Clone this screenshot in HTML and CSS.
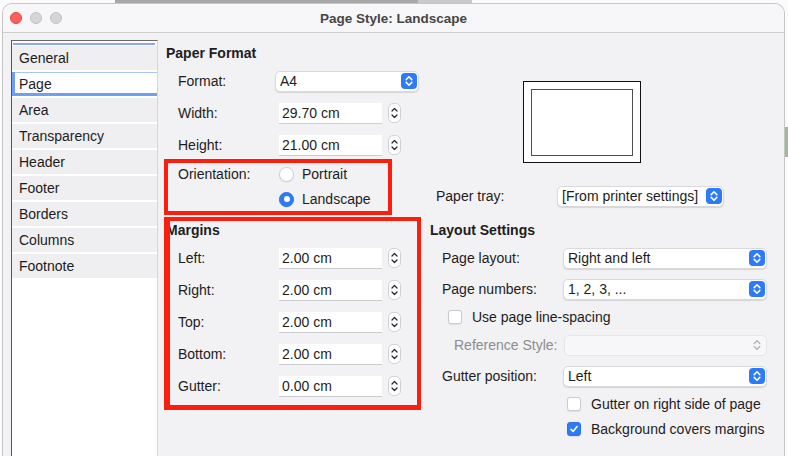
FILE: index.html
```html
<!DOCTYPE html>
<html>
<head>
<meta charset="utf-8">
<title>Page Style: Landscape</title>
<link rel="stylesheet" href="styles.css">
</head>
<body>
<div class="window">
  <div class="titlebar">
    <div class="lights"><span class="light red"></span><span class="light"></span><span class="light"></span></div>
    <div class="title">Page Style: Landscape</div>
    <div></div>
  </div>
  <div class="content">
    <div class="sidebar">
      <div class="focusline"></div>
      <div class="tab">General</div>
      <div class="tab selected">Page</div>
      <div class="tab">Area</div>
      <div class="tab">Transparency</div>
      <div class="tab">Header</div>
      <div class="tab">Footer</div>
      <div class="tab">Borders</div>
      <div class="tab">Columns</div>
      <div class="tab">Footnote</div>
    </div>
    <div class="main">
      <div class="col-left">
        <div class="heading h-paper">Paper Format</div>
        <div class="row">
          <span class="label">Format:</span>
          <div class="select s-format"><span>A4</span>
            <svg class="stepper" viewBox="0 0 16 16"><rect x="0" y="0" width="16" height="16" rx="4" fill="#2d7bf6"/><path d="M5.2 6.6 L8 3.8 L10.8 6.6 M5.2 9.4 L8 12.2 L10.8 9.4" fill="none" stroke="#fff" stroke-width="1.6" stroke-linecap="round" stroke-linejoin="round"/></svg>
          </div>
        </div>
        <div class="row">
          <span class="label">Width:</span>
          <div class="spin"><div class="field">29.70 cm</div>
            <svg class="spinbtn" viewBox="0 0 13 20"><rect x="0.5" y="0.5" width="12" height="19" rx="5" fill="#fff" stroke="#cfcfcf"/><path d="M4 8 L6.5 5.5 L9 8 M4 12 L6.5 14.5 L9 12" fill="none" stroke="#2a2a2a" stroke-width="1.3" stroke-linecap="round" stroke-linejoin="round"/></svg>
          </div>
        </div>
        <div class="row">
          <span class="label">Height:</span>
          <div class="spin"><div class="field">21.00 cm</div>
            <svg class="spinbtn" viewBox="0 0 13 20"><rect x="0.5" y="0.5" width="12" height="19" rx="5" fill="#fff" stroke="#cfcfcf"/><path d="M4 8 L6.5 5.5 L9 8 M4 12 L6.5 14.5 L9 12" fill="none" stroke="#2a2a2a" stroke-width="1.3" stroke-linecap="round" stroke-linejoin="round"/></svg>
          </div>
        </div>
        <div class="orow r1"><span class="label">Orientation:</span><span class="radio"></span><span>Portrait</span></div>
        <div class="orow r2"><span class="label"></span><span class="radio on"></span><span>Landscape</span></div>

        <div class="heading h-margins">Margins</div>
        <div class="row">
          <span class="label">Left:</span>
          <div class="spin"><div class="field">2.00 cm</div>
            <svg class="spinbtn" viewBox="0 0 13 20"><rect x="0.5" y="0.5" width="12" height="19" rx="5" fill="#fff" stroke="#cfcfcf"/><path d="M4 8 L6.5 5.5 L9 8 M4 12 L6.5 14.5 L9 12" fill="none" stroke="#2a2a2a" stroke-width="1.3" stroke-linecap="round" stroke-linejoin="round"/></svg>
          </div>
        </div>
        <div class="row">
          <span class="label">Right:</span>
          <div class="spin"><div class="field">2.00 cm</div>
            <svg class="spinbtn" viewBox="0 0 13 20"><rect x="0.5" y="0.5" width="12" height="19" rx="5" fill="#fff" stroke="#cfcfcf"/><path d="M4 8 L6.5 5.5 L9 8 M4 12 L6.5 14.5 L9 12" fill="none" stroke="#2a2a2a" stroke-width="1.3" stroke-linecap="round" stroke-linejoin="round"/></svg>
          </div>
        </div>
        <div class="row">
          <span class="label">Top:</span>
          <div class="spin"><div class="field">2.00 cm</div>
            <svg class="spinbtn" viewBox="0 0 13 20"><rect x="0.5" y="0.5" width="12" height="19" rx="5" fill="#fff" stroke="#cfcfcf"/><path d="M4 8 L6.5 5.5 L9 8 M4 12 L6.5 14.5 L9 12" fill="none" stroke="#2a2a2a" stroke-width="1.3" stroke-linecap="round" stroke-linejoin="round"/></svg>
          </div>
        </div>
        <div class="row">
          <span class="label">Bottom:</span>
          <div class="spin"><div class="field">2.00 cm</div>
            <svg class="spinbtn" viewBox="0 0 13 20"><rect x="0.5" y="0.5" width="12" height="19" rx="5" fill="#fff" stroke="#cfcfcf"/><path d="M4 8 L6.5 5.5 L9 8 M4 12 L6.5 14.5 L9 12" fill="none" stroke="#2a2a2a" stroke-width="1.3" stroke-linecap="round" stroke-linejoin="round"/></svg>
          </div>
        </div>
        <div class="row">
          <span class="label">Gutter:</span>
          <div class="spin"><div class="field">0.00 cm</div>
            <svg class="spinbtn" viewBox="0 0 13 20"><rect x="0.5" y="0.5" width="12" height="19" rx="5" fill="#fff" stroke="#cfcfcf"/><path d="M4 8 L6.5 5.5 L9 8 M4 12 L6.5 14.5 L9 12" fill="none" stroke="#2a2a2a" stroke-width="1.3" stroke-linecap="round" stroke-linejoin="round"/></svg>
          </div>
        </div>
      </div>

      <div class="col-right">
        <div class="preview"><div class="page"></div></div>
        <div class="rrow tray">
          <span class="rlabel">Paper tray:</span>
          <div class="select s-tray"><span>[From printer settings]</span>
            <svg class="stepper" viewBox="0 0 16 16"><rect x="0" y="0" width="16" height="16" rx="4" fill="#2d7bf6"/><path d="M5.2 6.6 L8 3.8 L10.8 6.6 M5.2 9.4 L8 12.2 L10.8 9.4" fill="none" stroke="#fff" stroke-width="1.6" stroke-linecap="round" stroke-linejoin="round"/></svg>
          </div>
        </div>
        <div class="heading h-layout">Layout Settings</div>
        <div class="rrow h32 ind">
          <span class="rlabel">Page layout:</span>
          <div class="select s-wide"><span>Right and left</span>
            <svg class="stepper" viewBox="0 0 16 16"><rect x="0" y="0" width="16" height="16" rx="4" fill="#2d7bf6"/><path d="M5.2 6.6 L8 3.8 L10.8 6.6 M5.2 9.4 L8 12.2 L10.8 9.4" fill="none" stroke="#fff" stroke-width="1.6" stroke-linecap="round" stroke-linejoin="round"/></svg>
          </div>
        </div>
        <div class="rrow h30 ind">
          <span class="rlabel">Page numbers:</span>
          <div class="select s-wide"><span>1, 2, 3, ...</span>
            <svg class="stepper" viewBox="0 0 16 16"><rect x="0" y="0" width="16" height="16" rx="4" fill="#2d7bf6"/><path d="M5.2 6.6 L8 3.8 L10.8 6.6 M5.2 9.4 L8 12.2 L10.8 9.4" fill="none" stroke="#fff" stroke-width="1.6" stroke-linecap="round" stroke-linejoin="round"/></svg>
          </div>
        </div>
        <div class="rrow h26 chk-line">
          <span class="checkbox"></span><span>Use page line-spacing</span>
        </div>
        <div class="rrow h30 ref">
          <span class="rlabel disabled">Reference Style:</span>
          <div class="select s-ref disabled-select"><span></span>
            <svg class="stepper" viewBox="0 0 16 16"><path d="M5.2 6.6 L8 3.8 L10.8 6.6 M5.2 9.4 L8 12.2 L10.8 9.4" fill="none" stroke="#b4b4b4" stroke-width="1.4" stroke-linecap="round" stroke-linejoin="round"/></svg>
          </div>
        </div>
        <div class="rrow h32 ind">
          <span class="rlabel">Gutter position:</span>
          <div class="select s-wide"><span>Left</span>
            <svg class="stepper" viewBox="0 0 16 16"><rect x="0" y="0" width="16" height="16" rx="4" fill="#2d7bf6"/><path d="M5.2 6.6 L8 3.8 L10.8 6.6 M5.2 9.4 L8 12.2 L10.8 9.4" fill="none" stroke="#fff" stroke-width="1.6" stroke-linecap="round" stroke-linejoin="round"/></svg>
          </div>
        </div>
        <div class="rrow h24 chk-sub">
          <span class="checkbox"></span><span>Gutter on right side of page</span>
        </div>
        <div class="rrow h26 chk-sub">
          <span class="checkbox checked"><svg viewBox="0 0 14 14"><path d="M3.4 7.3 L5.9 9.8 L10.6 4.2" fill="none" stroke="#fff" stroke-width="1.9" stroke-linecap="round" stroke-linejoin="round"/></svg></span><span>Background covers margins</span>
        </div>
      </div>
    </div>
  </div>
  <div class="annot a-orient"></div>
  <div class="annot a-margins"></div>
</div>
</body>
</html>
```
FILE: styles.css
```css
html, body {
  margin: 0;
  padding: 0;
}
body {
  width: 788px;
  height: 456px;
  overflow: hidden;
  font-family: "Liberation Sans", Arial, Helvetica, sans-serif;
  font-size: 14px;
  color: #1d1d1d;
  background:
    linear-gradient(#a8a8a8, #a8a8a8) 115px 0 / 303px 4px no-repeat,
    linear-gradient(#c9c9c9, #c9c9c9) 418px 0 / 54px 4px no-repeat,
    linear-gradient(#a5b997, #a5b997) 784px 127px / 4px 30px no-repeat,
    #fbfbfb;
}
.window {
  position: relative;
  margin: 3px 0 0 2px;
  width: 783px;
  height: 470px;
  box-sizing: border-box;
  border: 1px solid #c6c6c6;
  border-bottom: none;
  border-radius: 10px 10px 0 0;
  background: #f2f1f4;
  overflow: hidden;
}
.titlebar {
  height: 28px;
  border-bottom: 1px solid #cdcdcd;
  background: #f7f6f8;
  display: grid;
  grid-template-columns: 1fr auto 1fr;
  align-items: center;
}
.lights {
  display: flex;
  gap: 8px;
  padding-left: 7px;
}
.light {
  width: 12px;
  height: 12px;
  box-sizing: border-box;
  border-radius: 50%;
  background: #d5d4d6;
  border: 1px solid #c3c2c4;
}
.light.red {
  background: #fe5f57;
  border-color: #e2463f;
}
.title {
  font-weight: bold;
  font-size: 13.5px;
  color: #464646;
}
.content {
  display: flex;
  height: 440px;
}
.sidebar {
  margin: 7px 0 0 8px;
  width: 147px;
  flex: none;
  box-sizing: border-box;
  border-top: 1px solid #6a6a6a;
  border-left: 1px solid #555;
  border-right: 1px solid #d6d6d6;
  background: #fff;
  padding-top: 2px;
}
.focusline {
  height: 2px;
  margin: 0 2px 1px 1px;
  background: #88a6f1;
}
.tab {
  height: 24px;
  line-height: 24px;
  margin-bottom: 2px;
  background: #efeef1;
  padding-left: 7px;
}
.tab.selected {
  background: #fff;
  box-shadow: inset 3px -3px 0 #6f9ef3, inset 0 1px 0 #aac4f6;
}
.main {
  flex: 1;
  display: flex;
}
.col-left {
  width: 263px;
  flex: none;
  box-sizing: border-box;
  padding: 10px 0 0 8px;
}
.heading {
  font-weight: bold;
  height: 20px;
  line-height: 20px;
}
.h-paper {
  margin-bottom: 2px;
}
.h-margins {
  margin-top: 9px;
  margin-bottom: 2px;
}
.row {
  height: 32px;
  display: flex;
  align-items: center;
  padding-left: 12px;
}
.label {
  width: 97px;
  flex: none;
}
.select {
  height: 21px;
  box-sizing: border-box;
  border: 1px solid #d9d9db;
  border-radius: 5px;
  background: #fff;
  display: flex;
  align-items: center;
  padding-left: 4px;
  box-shadow: 0 1px 1px rgba(0, 0, 0, 0.12);
}
.stepper {
  margin-left: auto;
  margin-right: 1px;
  width: 16px;
  height: 16px;
  flex: none;
}
.s-format { width: 144px; }
.s-tray { width: 167px; }
.s-wide { width: 204px; }
.s-ref { width: 203px; }
.disabled-select {
  background: #f7f6f8;
  border-color: #e6e5e8;
  box-shadow: none;
}
.spin {
  display: flex;
  align-items: center;
  margin-left: 4px;
}
.field {
  width: 103px;
  height: 20px;
  line-height: 20px;
  box-sizing: border-box;
  padding-left: 3px;
  background: #fff;
  box-shadow: 0 1px 0 #cdcdcf;
}
.spinbtn {
  margin-left: 6px;
  width: 13px;
  height: 20px;
}
.orow {
  display: flex;
  align-items: center;
  padding-left: 12px;
}
.orow.r1 { height: 26px; }
.orow.r2 { height: 24px; }
.radio {
  width: 15px;
  height: 15px;
  box-sizing: border-box;
  border-radius: 50%;
  margin-left: 4px;
  margin-right: 8px;
  background: #fff;
  border: 1px solid #d0d0d2;
  box-shadow: 0 0.5px 1px rgba(0, 0, 0, 0.1);
  flex: none;
  display: flex;
  align-items: center;
  justify-content: center;
}
.radio.on {
  background: #2d7bf6;
  border-color: #2a74e8;
}
.radio.on::after {
  content: "";
  width: 6px;
  height: 6px;
  border-radius: 50%;
  background: #fff;
}
.col-right {
  flex: 1;
  padding-top: 48px;
}
.preview {
  margin-left: 102px;
  width: 118px;
  height: 82px;
  box-sizing: border-box;
  border: 1px solid #111;
  background: #fff;
  padding: 7px;
}
.page {
  width: 102px;
  height: 67px;
  box-sizing: border-box;
  border: 1.5px solid #4f4f4f;
  background: #fff;
}
.rrow {
  display: flex;
  align-items: center;
}
.rlabel {
  width: 121px;
  flex: none;
}
.tray {
  margin-top: 19px;
  height: 28px;
  padding-left: 15px;
}
.h-layout {
  margin-top: 10px;
  margin-bottom: 2px;
  padding-left: 9px;
}
.ind { padding-left: 21px; }
.h32 { height: 32px; }
.h30 { height: 30px; }
.h26 { height: 26px; }
.h24 { height: 24px; }
.ref { padding-left: 33px; }
.ref .rlabel { width: 110px; }
.rlabel.disabled { color: #8d8d8f; }
.chk-line { padding-left: 27px; }
.chk-sub { padding-left: 146px; }
.checkbox {
  width: 14px;
  height: 14px;
  box-sizing: border-box;
  border-radius: 3px;
  border: 1px solid #cbcbcd;
  background: #fff;
  margin-right: 10px;
  flex: none;
  box-shadow: 0 0.5px 1px rgba(0, 0, 0, 0.08);
}
.checkbox.checked {
  background: #2d7bf6;
  border-color: #2a74e8;
}
.checkbox svg {
  display: block;
  width: 12px;
  height: 12px;
}
.annot {
  position: absolute;
  box-sizing: border-box;
  border: 4px solid #fc1e0c;
}
.a-orient {
  left: 161px;
  top: 155px;
  width: 228px;
  height: 56px;
}
.a-margins {
  left: 161px;
  top: 213px;
  width: 257px;
  height: 193px;
  border-left-width: 6px;
  border-bottom-width: 5px;
}
```
